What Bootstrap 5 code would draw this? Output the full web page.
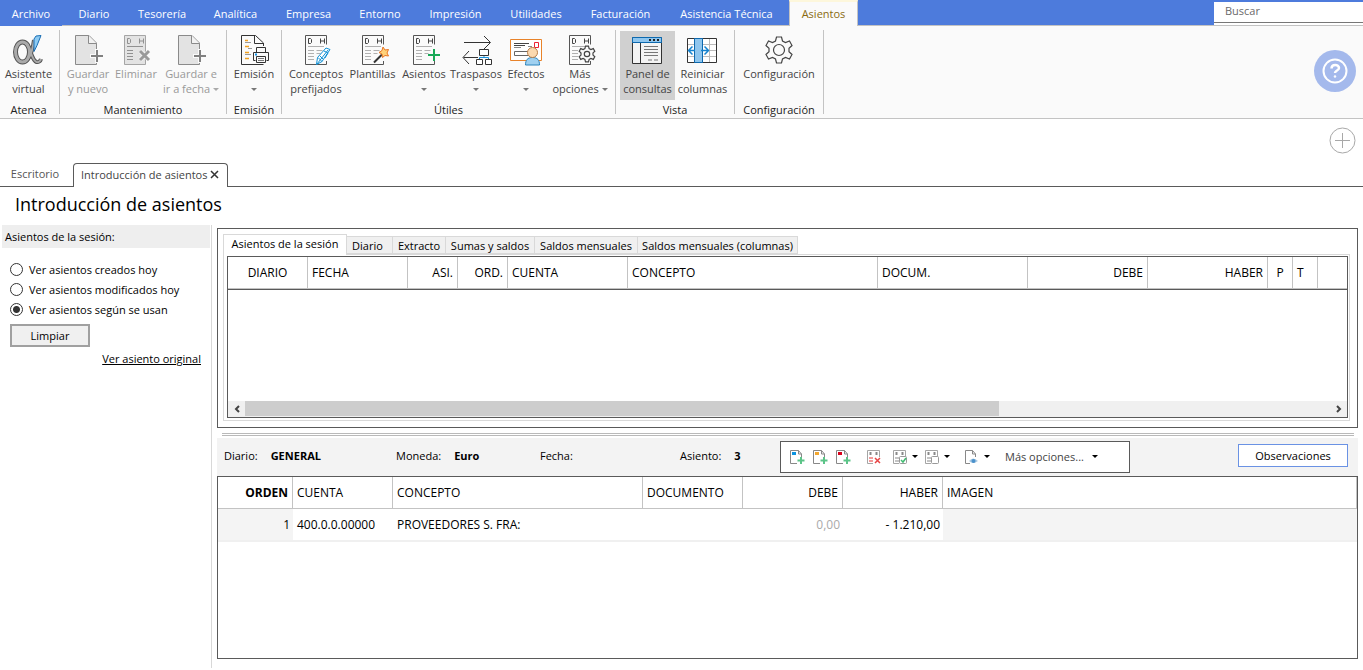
<!DOCTYPE html>
<html lang="es">
<head>
<meta charset="utf-8">
<meta name="viewport" content="width=device-width, initial-scale=1">
<title>Introducción de asientos</title>
<link href="https://cdn.jsdelivr.net/npm/bootstrap@5.3.0/dist/css/bootstrap.min.css" rel="stylesheet">
<style>
  :root { --ink:#5a5a5a; --rule:#c3c3c3; --blue:#4d7bdc; }
  body { font-family:"Open Sans","Noto Sans",sans-serif; font-size:11px; line-height:15px; color:#000; background:#fff; }
  button { font-family:inherit; color:inherit; background:none; border:0; padding:0; }
  svg { display:block; flex:none; }

  .menu-bar { background:var(--blue); height:26px; border-bottom:1px solid var(--rule); }
  .menu-tabs { display:grid; grid-template-columns:62px 64px 72px 75px 71px 72px 79px 82px 87px 125px 69px; }
  .menu-tabs button { color:#fff; height:25px; padding-top:1px; white-space:nowrap; }
  .menu-tabs .is-file { height:26px; background:var(--blue); }
  .menu-tabs .is-current { height:26px; color:#8a6a10; background:#fafafa; border:1px solid var(--rule); border-top:2px solid #fdf7dc; border-bottom:0; padding:0 0 1px; }
  .search-box { width:149px; height:23px; margin-top:2px; background:#fff; }
  .search-box input { width:100%; height:21px; border:0; border-bottom:1px solid #777; border-radius:0; padding:0 11px 4px; outline:0; background:transparent; }
  .search-box input::placeholder { color:#6a6a6a; opacity:1; }

  .ribbon { background:#fafafa; border-bottom:1px solid var(--rule); height:93px; }
  .rb-group { border-right:1px solid var(--rule); margin:4px 0; padding:1px 4px 0; display:flex; flex-direction:column; }
  .rb-tools { display:grid; height:69px; flex:none; }
  .rb-tools button { color:#444; padding-top:3px; display:flex; flex-direction:column; align-items:center; white-space:nowrap; }
  .rb-tools button span { display:block; }
  .rb-tools button:disabled { color:#999; }
  .rb-tools .is-on { background:#d0d0d0; }
  .rb-name { text-align:center; color:#222; line-height:20px; white-space:nowrap; }
  .g-atenea { width:60px; padding-left:0; padding-right:2px; } .g-emision { width:55px; }
  .g-mant { width:167px; } .g-mant .rb-tools { grid-template-columns:48px 48px 62px; }
  .g-utiles { width:334px; } .g-utiles .rb-tools { grid-template-columns:60px 53px 50px 54px 46px 62px; }
  .g-vista { width:119px; } .g-vista .rb-tools { grid-template-columns:55px 55px; }
  .g-conf { width:89px; padding-left:0; padding-right:0; }
  .caret { display:inline-block !important; width:0; height:0; border:3px solid transparent; border-top-color:currentColor; border-bottom:0; vertical-align:2px; }
  .rb-tools .caret { border-top-color:#777; }
  .rb-tools :disabled .caret { border-top-color:#aaa; }
  .help-btn { width:42px; height:42px; border-radius:50%; background:#a4b9ec; margin:24px 7px 0 auto; }

  .quick-row { height:44px; padding:8px 7px 0; }
  .doc-tabs { border-bottom:1px solid var(--ink); height:24px; }
  .doc-tabs button { color:#555; height:24px; }
  .doc-tabs .tab-home { width:73px; padding:0 3px 3px 0; }
  .doc-tabs .tab-open { width:155px; color:#444; background:#fff; border:1px solid var(--ink); border-bottom:0; border-radius:4px 4px 0 0; padding:0 8px 3px 7px; white-space:nowrap; }
  .page-title { font-size:18px; line-height:34px; padding-left:15px; margin:0; height:38px; }

  .side { width:212px; border-right:1px solid #d8d8d8; margin-bottom:2px; }
  .side-head { background:#eee; height:23px; line-height:23px; margin:0 1px 11px 2px; padding-left:3px; }
  .side-body { padding:0 10px; }
  .side label { height:20px; }
  .side input[type=radio] { appearance:none; width:13px; height:13px; border:1px solid #333; border-radius:50%; background:#fff; margin:0 6px 0 0; flex:none; }
  .side input[type=radio]:checked { background:radial-gradient(circle,#333 0 3px,#fff 4px); }
  .btn-clear { width:80px; height:23px; border:2px solid #a0a0a0; background:#f0f0f0; margin:5px 0 4px; }
  .side a { color:#000; }

  .main { min-width:0; padding:3px 5px 11px; }
  .session { border:1px solid var(--ink); padding:5px 7px 6px 5px; }
  .session-tabs button { background:#f0f0f0; border:1px solid #d9d9d9; border-left:0; height:18px; margin-top:2px; white-space:nowrap; }
  .session-tabs .is-current { background:#fff; border:1px solid #d9d9d9; border-bottom:0; width:124px; height:21px; margin-top:0; padding-bottom:3px; position:relative; }
  .w-46 { width:46px; } .w-53 { width:53px; } .w-89 { width:89px; } .w-103 { width:103px; } .w-160 { width:160px; }
  .session-pane { border:1px solid #d9d9d9; padding:1px 1px 2px 3px; margin-top:-1px; }
  .session-grid { border:1px solid var(--ink); }
  .session-body { height:111px; }

  table.ledger { width:100%; table-layout:fixed; border-collapse:separate; border-spacing:0; font-size:12px; }
  .ledger th { font-weight:400; height:32px; border-right:1px solid var(--rule); border-bottom:1px solid var(--rule); padding:0 4px; white-space:nowrap; }
  .session-grid .ledger { border-bottom:1px solid var(--ink); }
  .session-grid .ledger th:last-child { border-right:0; }
  .ledger td { height:33px; padding:0 4px; border-bottom:2px solid #f0f0f0; white-space:nowrap; }
  .ledger td.shade { background:#f4f4f4; }
  .ledger .num { text-align:right; } .ledger td.num { padding-right:3px; }
  .ledger td.empty-sum { color:#aaa; }
  .c25 { width:25px; } .c50 { width:50px; } .c75 { width:75px; } .c80 { width:80px; } .c100 { width:100px; } .c120 { width:120px; } .c150 { width:150px; } .c250 { width:250px; }

  .hscroll { height:16px; background:#f0f0f0; }
  .hscroll button { width:17px; height:15px; display:flex; align-items:center; justify-content:center; }
  .hscroll-thumb { height:15px; width:69.5%; background:#cdcdcd; }
  .splitter { height:3px; border-top:1px solid #b9b9b9; border-bottom:1px solid #b9b9b9; margin:5px 4px 2px 5px; }

  .entry-bar { background:#f3f3f3; height:38px; display:grid; grid-template-columns:172px 144px 140px 107px 350px 1fr; padding-bottom:1px; }
  .entry-bar dl { margin:0; display:flex; padding:0 0 2px 7px; }
  .entry-bar dt { font-weight:400; } .entry-bar dd { margin:0 0 0 13px; font-weight:700; }
  .entry-tools { border:1px solid var(--ink); background:#fff; height:32px; padding-left:4px; }
  .entry-tools button { height:24px; min-width:23px; display:flex; align-items:center; justify-content:center; }
  .entry-tools .with-menu { min-width:32px; gap:4px; }
  .entry-tools .with-menu .caret, .entry-tools .more .caret { border-top-color:#000; }
  .entry-tools .more { color:#444; gap:8px; margin-left:12px; }
  .btn-notes { width:110px; height:23px; border:1px solid #6a92e4; background:#fff; margin:0 10px 3px 0; }
  .entry-grid { border:1px solid var(--ink); }
</style>
</head>
<body class="d-flex flex-column min-vh-100">

<svg width="0" height="0" class="position-absolute" aria-hidden="true">
  <defs>
    <g id="dh" fill="none">
      <path d="M26.500 10.500V1.500H5.500V30.500H26.500V27" fill="none" stroke="#555"/>
      <path d="M8.500 4.500v5h2l1-1v-3l-1-1zM20.500 4.500v5M24.500 4.500v5M20.500 7h4" stroke="#444"/>
      <path d="M8 12.500h16M8 16.500h6M8 19.500h6M8 22.500h6M8 25.500h6M16.500 16.500h6M16.500 19.500h4" stroke="#b0b0b0"/>
    </g>
    <g id="newdoc" fill="none" stroke="#8a8a8a">
      <path d="M3.500 1.500H17L24.500 9V30.500H3.500z" fill="#e3e3e3"/>
      <path d="M16.500 1.500v8h8" fill="#f2f2f2"/>
      <path d="M25 15v14M18 22h14" stroke="#fafafa" stroke-width="4"/>
      <path d="M25 16v12M19 22h12" stroke="#808080" stroke-width="2"/>
    </g>
    <g id="adddoc" fill="none">
      <path d="M12.500 8V5L9.500 1.500H1.500V14.500H8M9.500 1.500V5h3" stroke="#888"/>
      <path d="M12 8v7M8.500 11.500h7" stroke="#5cc488" stroke-width="2"/>
    </g>
    <g id="minidh" fill="none">
      <path d="M13.500 8V1.500H1.500V14.500H7" stroke="#a5a5a5"/>
      <path d="M4.500 3v3M10.500 3v3" stroke="#888" stroke-width="2"/>
      <path d="M3 9h4M3 12h4" stroke="#c4c4c4" stroke-width="2"/>
    </g>
    <path id="cog" d="M-2.500-13h5l1 4 3 1.500 4-1.500L13-4.500 10-1.800v3.600L13 4.500 10.500 9l-4-1.500-3 1.500-1 4h-5l-1-4-3-1.500-4 1.500L-13 4.500-10 1.800v-3.600L-13-4.500-10.500-9l4 1.500 3-1.500z"/>
  </defs>
</svg>

<header>
  <div class="menu-bar d-flex justify-content-between">
    <nav class="menu-tabs" aria-label="Menú principal">
      <button class="is-file" type="button">Archivo</button>
      <button type="button">Diario</button>
      <button type="button">Tesorería</button>
      <button type="button">Analítica</button>
      <button type="button">Empresa</button>
      <button type="button">Entorno</button>
      <button type="button">Impresión</button>
      <button type="button">Utilidades</button>
      <button type="button">Facturación</button>
      <button type="button">Asistencia Técnica</button>
      <button class="is-current" type="button">Asientos</button>
    </nav>
    <div class="search-box"><input type="text" placeholder="Buscar" aria-label="Buscar"></div>
  </div>

  <div class="ribbon d-flex">
    <section class="rb-group g-atenea">
      <div class="rb-tools">
        <button type="button">
          <svg width="32" height="32" viewBox="0 0 32 32" fill="none"><ellipse cx="9.500" cy="18" rx="7" ry="10" stroke="#555" stroke-width="5"/><path d="M21 6C19 20 15 28 9.500 28M9.500 8c8 0 8 18 14 20 2 .5 4-1 4.500-3" stroke="#555" stroke-width="4"/><ellipse cx="9.500" cy="18" rx="7" ry="10" stroke="#aaa" stroke-width="3"/><path d="M21 6C19 20 15 28 9.500 28M9.500 8c8 0 8 18 14 20 2 .5 4-1 4.500-3" stroke="#aaa" stroke-width="2"/><path d="M21 5l2-3 5-.5-4 10-3 6z" fill="#8ecbf2" stroke="#1a6fb5"/></svg>
          <span>Asistente<br>virtual</span>
        </button>
      </div>
      <div class="rb-name">Atenea</div>
    </section>
    <section class="rb-group g-mant">
      <div class="rb-tools">
        <button type="button" disabled><svg width="32" height="32"><use href="#newdoc"/></svg><span>Guardar<br>y nuevo</span></button>
        <button type="button" disabled>
          <svg width="32" height="32" fill="none"><path d="M4.500 1.500h21v29h-21z" fill="#e3e3e3" stroke="#a5a5a5"/><path d="M7.500 4.500v5h2l1-1v-3l-1-1zM19.500 4.500v5M23.500 4.500v5M19.500 7h4M7 12.500h16M7 16.500h6M7 19.500h6M7 22.500h6M7 25.500h6" stroke="#909090"/><path d="M20 17l9 9m0-9l-9 9" stroke="#fafafa" stroke-width="4"/><path d="M20 17l9 9m0-9l-9 9" stroke="#999" stroke-width="3"/></svg>
          <span>Eliminar</span>
        </button>
        <button type="button" disabled><svg width="32" height="32"><use href="#newdoc"/></svg><span>Guardar e<br>ir a fecha <i class="caret"></i></span></button>
      </div>
      <div class="rb-name">Mantenimiento</div>
    </section>
    <section class="rb-group g-emision">
      <div class="rb-tools">
        <button type="button">
          <svg width="32" height="32" fill="none"><path d="M25.500 12V9L17.500 1.500H3.500V30.500H25.500M16.500 1.500V9.500H25" stroke="#333"/><path d="M7 6.500h3M7 12.500h4M7 18.500h4M7 24.500h4" stroke="#f0a020" stroke-width="1.500"/><path d="M7 8.500h6M10 14.500h4M7 20.500h6" stroke="#999"/><path d="M17.500 26.500H15.500V18.500H30.500V26.500H28.500M18.500 18V13.500H27.500V18M18.500 22.500h9v6h-9z" fill="#fafafa" stroke="#333"/><path d="M20 24.500h6M20 26.500h6" stroke="#777"/><path d="M17 20.500h2" stroke="#1492e6" stroke-width="2"/></svg>
          <span>Emisión</span><span><i class="caret"></i></span>
        </button>
      </div>
      <div class="rb-name">Emisión</div>
    </section>
    <section class="rb-group g-utiles">
      <div class="rb-tools">
        <button type="button">
          <svg width="32" height="32" fill="none"><use href="#dh"/><path d="M26 14l4 1.500-8 12-5.500 3 1-7z" fill="#fff" stroke="#1190d5"/><path d="M17 30l11-14M18 23.500l4 4M24 17l4 2-3 5M20 22l3 3" stroke="#1190d5"/></svg>
          <span>Conceptos<br>prefijados</span>
        </button>
        <button type="button">
          <svg width="32" height="32" fill="none"><use href="#dh"/><path d="M17 28.500l8-8" stroke="#333" stroke-width="2"/><path d="M26 13l2 3 3.500-.5-1.500 3.500 1.500 3-3.500-.5-2.500 2-.5-3.500-3-1.500 3-2z" fill="#ffd27a" stroke="#e87522"/></svg>
          <span>Plantillas</span>
        </button>
        <button type="button">
          <svg width="32" height="32" fill="none"><use href="#dh"/><path d="M26 15v12M20 21h12" stroke="#18a957" stroke-width="2"/></svg>
          <span>Asientos</span><span><i class="caret"></i></span>
        </button>
        <button type="button">
          <svg width="32" height="32" fill="none" stroke="#333"><path d="M4 8.500h26M24 2l6.500 6.500L24 15M18 23.500H3.500M9 17l-6 6.500L9 30"/><path d="M19.500 15.500h9v6h-9zM16.500 25.500h6v5h-6zM25.500 25.500h6v5h-6z" fill="#fff"/><path d="M19.500 25v-1.500h9V25M24 22v2" stroke="#1b93dc"/></svg>
          <span>Traspasos</span><span><i class="caret"></i></span>
        </button>
        <button type="button">
          <svg width="32" height="32" fill="none"><path d="M.5 5.500h31v21H.5z" fill="#fff" stroke="#e8832a"/><path d="M4 9.500h15M4 11.500h11" stroke="#444"/><path d="M4 13.500h7M18 12.500h4" stroke="#888"/><path d="M4.500 17.500h16v4h-16z" stroke="#666"/><path d="M24.500 8.500h4v5h-4z" stroke="#e23"/><path d="M15.500 31c0-5 2-7.500 7-7.500s7 2.500 7 7.500z" fill="#9fd0f0" stroke="#2b84bd"/><circle cx="22.500" cy="18.500" r="5" fill="#fbd9b0" stroke="#b97e48"/></svg>
          <span>Efectos</span><span><i class="caret"></i></span>
        </button>
        <button type="button">
          <svg width="32" height="32" fill="none"><use href="#dh"/><g transform="translate(23 20) scale(.6)" stroke="#444" fill="#fafafa" stroke-width="2"><use href="#cog"/><circle r="4.500"/></g></svg>
          <span>Más<br>opciones <i class="caret"></i></span>
        </button>
      </div>
      <div class="rb-name">Útiles</div>
    </section>
    <section class="rb-group g-vista">
      <div class="rb-tools">
        <button class="is-on" type="button" aria-pressed="true">
          <svg width="32" height="32" fill="none"><path d="M.5 3.500h29v26H.5z" fill="#f4f4f4" stroke="#333"/><path d="M.5 3.500h29v5H.5z" fill="#8fc6ee" stroke="#0e69ae"/><path d="M17 6h2M21 6h2M25 6h2" stroke="#222" stroke-width="2"/><path d="M8.500 9v20" stroke="#333"/><path d="M12 12.500h14M12 15.500h14M12 18.500h14M12 21.500h14M16 26h4M22 26h4" stroke="#777"/></svg>
          <span>Panel de<br>consultas</span>
        </button>
        <button type="button">
          <svg width="32" height="32" fill="none"><path d="M.5 4.500h29v24H.5z" fill="#fff" stroke="#333"/><path d="M1 10.500h28M1 16.500h28M1 22.500h28M22.500 5v23" stroke="#bbb"/><path d="M7.500 4.500h8v24h-8z" fill="#8fc6ee" stroke="#0e69ae"/><path d="M8 16.500H2M5.500 12.500l-4 4 4 4M14 16.500h7M17.500 12.500l4 4-4 4" stroke="#1583cf" stroke-width="1.500"/></svg>
          <span>Reiniciar<br>columnas</span>
        </button>
      </div>
      <div class="rb-name">Vista</div>
    </section>
    <section class="rb-group g-conf">
      <div class="rb-tools">
        <button type="button">
          <svg width="32" height="32"><g transform="translate(16 16)" fill="none" stroke="#444" stroke-width="1.200"><use href="#cog"/><circle r="5.500"/></g></svg>
          <span>Configuración</span>
        </button>
      </div>
      <div class="rb-name">Configuración</div>
    </section>
    <button class="help-btn d-flex align-items-center justify-content-center" type="button" aria-label="Ayuda">
      <svg width="26" height="26" fill="none" stroke="#fff"><circle cx="13" cy="13" r="11.500" stroke-width="2"/><path d="M9.500 10.500c0-5 7.500-4.500 7.500-.5 0 2.500-4 2.500-4 5" stroke-width="2.500"/><circle cx="13" cy="18.500" r="1" fill="#fff" stroke-width=".5"/></svg>
    </button>
  </div>
</header>

<div class="quick-row d-flex justify-content-end">
  <button type="button" aria-label="Añadir" class="align-self-start"><svg width="27" height="27" fill="none" stroke="#a8a8a8"><circle cx="13.500" cy="13.500" r="12.500"/><path d="M13.500 6v15M6 13.500h15"/></svg></button>
</div>

<div class="doc-tabs d-flex">
  <button class="tab-home" type="button">Escritorio</button>
  <button class="tab-open d-flex align-items-center justify-content-between" type="button"><span>Introducción de asientos</span><svg width="9" height="9"><path d="M1 1l7 7M8 1L1 8" stroke="#333" stroke-width="1.500"/></svg></button>
</div>
<h1 class="page-title fw-normal">Introducción de asientos</h1>

<div class="d-flex flex-grow-1">
  <aside class="side flex-shrink-0">
    <div class="side-head">Asientos de la sesión:</div>
    <form class="side-body">
      <label class="d-flex align-items-center"><input type="radio" name="ver">Ver asientos creados hoy</label>
      <label class="d-flex align-items-center"><input type="radio" name="ver">Ver asientos modificados hoy</label>
      <label class="d-flex align-items-center"><input type="radio" name="ver" checked>Ver asientos según se usan</label>
      <button class="btn-clear" type="button">Limpiar</button>
      <div class="text-end"><a href="#">Ver asiento original</a></div>
    </form>
  </aside>

  <main class="main flex-grow-1 d-flex flex-column">
    <section class="session">
      <div class="session-tabs d-flex">
        <button class="is-current" type="button">Asientos de la sesión</button>
        <button class="w-46 pe-1" type="button">Diario</button>
        <button class="w-53" type="button">Extracto</button>
        <button class="w-89" type="button">Sumas y saldos</button>
        <button class="w-103" type="button">Saldos mensuales</button>
        <button class="w-160" type="button">Saldos mensuales (columnas)</button>
      </div>
      <div class="session-pane">
        <div class="session-grid">
          <table class="ledger">
            <colgroup><col class="c80"><col class="c100"><col class="c50"><col class="c50"><col class="c120"><col class="c250"><col class="c150"><col class="c120"><col class="c120"><col class="c25"><col class="c25"><col></colgroup>
            <thead><tr><th class="text-center">DIARIO</th><th>FECHA</th><th class="num">ASI.</th><th class="num">ORD.</th><th>CUENTA</th><th>CONCEPTO</th><th>DOCUM.</th><th class="num">DEBE</th><th class="num">HABER</th><th class="text-center">P</th><th>T</th><th></th></tr></thead>
          </table>
          <div class="session-body"></div>
          <div class="hscroll d-flex">
            <button type="button" aria-label="Desplazar a la izquierda"><svg width="8" height="8" fill="none"><path d="M6 1L3 4l3 3" stroke="#444" stroke-width="2"/></svg></button>
            <div class="flex-grow-1"><div class="hscroll-thumb"></div></div>
            <button type="button" aria-label="Desplazar a la derecha"><svg width="8" height="8" fill="none"><path d="M2 1l3 3-3 3" stroke="#444" stroke-width="2"/></svg></button>
          </div>
        </div>
      </div>
    </section>
    <div class="splitter"></div>

    <div class="entry-bar align-items-center">
      <dl><dt>Diario:</dt><dd>GENERAL</dd></dl>
      <dl><dt>Moneda:</dt><dd>Euro</dd></dl>
      <dl><dt>Fecha:</dt><dd></dd></dl>
      <dl><dt>Asiento:</dt><dd>3</dd></dl>
      <div class="entry-tools d-flex align-items-center">
        <button type="button" aria-label="Nuevo asiento"><svg width="16" height="16"><use href="#adddoc"/><path d="M3 3h4v3H3z" fill="#0b93e0"/></svg></button>
        <button type="button" aria-label="Nuevo apunte"><svg width="16" height="16"><use href="#adddoc"/><path d="M3 3h4v3H3z" fill="#f3a72e"/></svg></button>
        <button type="button" aria-label="Nuevo vencimiento"><svg width="16" height="16"><use href="#adddoc"/><path d="M3 3h4v3H3z" fill="#d9001b"/></svg></button>
        <button type="button" class="ms-2" aria-label="Eliminar apunte"><svg width="16" height="16" fill="none"><use href="#minidh"/><path d="M3 9h4M3 12h4" stroke="#f49a9a" stroke-width="2"/><path d="M9 9l5 5m0-5l-5 5" stroke="#e84545" stroke-width="1.500"/></svg></button>
        <button type="button" class="with-menu ms-1" aria-label="Marcar apuntes"><svg width="16" height="16" fill="none"><use href="#minidh"/><rect x="7.500" y="7.500" width="7" height="7" rx="1" fill="#fff" stroke="#999"/><path d="M9 11l2 2 3-4" stroke="#3fba70" stroke-width="1.500"/></svg><i class="caret"></i></button>
        <button type="button" class="with-menu" aria-label="Desmarcar apuntes"><svg width="16" height="16" fill="none"><use href="#minidh"/><rect x="7.500" y="7.500" width="7" height="7" rx="1" fill="#fff" stroke="#999"/></svg><i class="caret"></i></button>
        <button type="button" class="with-menu ms-2" aria-label="Ver documento"><svg width="16" height="16" fill="none"><path d="M11.500 8V5L8.500 1.500H1.500V14.500H6M8.500 1.500V5h3" stroke="#888"/><path d="M5 12q4-5 9 0-5 4-9 0z" fill="#a9c9e4"/><circle cx="9.500" cy="12" r="2" fill="#4b92cc"/></svg><i class="caret"></i></button>
        <button type="button" class="more"><span>Más opciones...</span><i class="caret"></i></button>
      </div>
      <div class="text-end"><button class="btn-notes" type="button">Observaciones</button></div>
    </div>

    <section class="entry-grid flex-grow-1">
      <table class="ledger">
        <colgroup><col class="c75"><col class="c100"><col class="c250"><col class="c100"><col class="c100"><col class="c100"><col></colgroup>
        <thead><tr><th class="num fw-bold">ORDEN</th><th>CUENTA</th><th>CONCEPTO</th><th>DOCUMENTO</th><th class="num">DEBE</th><th class="num">HABER</th><th>IMAGEN</th></tr></thead>
        <tbody><tr><td class="num shade">1</td><td>400.0.0.00000</td><td>PROVEEDORES S. FRA:</td><td></td><td class="num empty-sum">0,00</td><td class="num">- 1.210,00</td><td class="shade"></td></tr></tbody>
      </table>
    </section>
  </main>
</div>

<script src="https://cdn.jsdelivr.net/npm/bootstrap@5.3.0/dist/js/bootstrap.bundle.min.js"></script>
</body>
</html>
